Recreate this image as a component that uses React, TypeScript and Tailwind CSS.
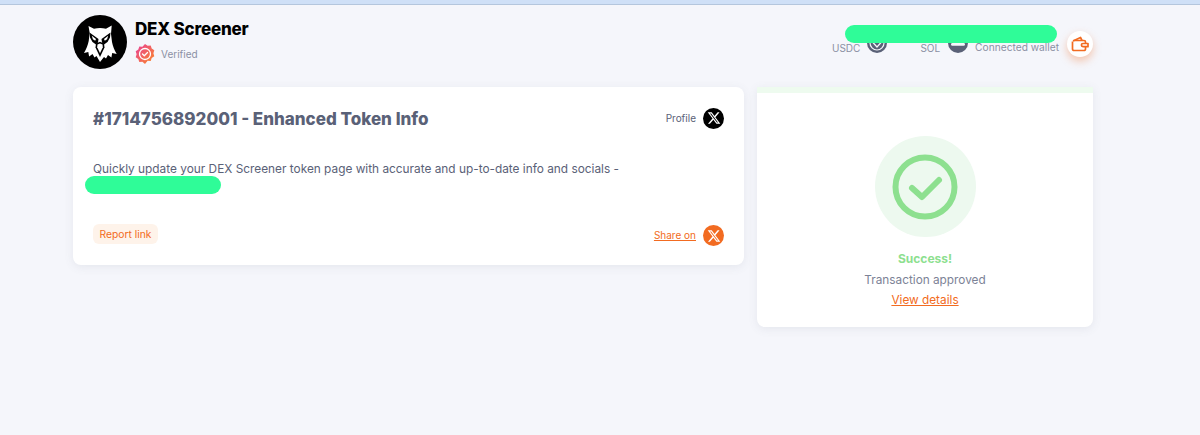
const XLogo = ({ className }: { className?: string }) => (
  <svg viewBox="0 0 24 24" className={className} fill="currentColor">
    <path d="M18.244 2.25h3.308l-7.227 8.26 8.502 11.24H16.17l-5.214-6.817L4.99 21.75H1.68l7.73-8.835L1.254 2.25H8.08l4.713 6.231zm-1.161 17.52h1.833L7.084 4.126H5.117z" />
  </svg>
);

const Eagle = () => (
  <svg viewBox="0 0 54 54" className="h-[54px] w-[54px]">
    <circle cx="27" cy="27" r="27" fill="#000" />
    {/* head */}
    <path d="M15.500 11l5.500 2.800c2-.6 4-.8 6-.8s4 .2 6 .8l5.700-3.300-.7 8.500 1 8c.8 4 2.300 8 4.700 12l-4.500-1-.8 4.500-3.400-2.500-2 3.500-2-1.500L27 47l-3.500-6-2 1.500-2-3.500-3.400 2.500-.8-4.500-4.300 1c2.400-4 3.900-8 4.700-12l1-8z" fill="#fff" />
    {/* brows and eyes */}
    <path d="M16.500 17.500l9 6.500-.5 3.500-2 2-3.500-2.500-2.500-4.500zM37.500 17.500l-9 6.500.5 3.500 2 2 3.500-2.500 2.500-4.500z" fill="#000" />
    <path d="M18.800 20.800l4.200 3.200-.8 1.800-2.300-1.500zM35.200 20.800l-4.200 3.200.8 1.800 2.300-1.500z" fill="#fff" />
    {/* beak */}
    <path d="M23 28.500l4-1.800 4 1.800 .5 4-4.500 9.500-4.500-9.500z" fill="#000" />
    <path d="M24.500 29.500l2.500-1 2.500 1 .3 2.800-2.800 6-2.800-6z" fill="#fff" />
  </svg>
);

const VerifiedBadge = () => (
  <svg viewBox="0 0 20 20" className="h-5 w-5">
    <defs>
      <linearGradient id="badge" x1="0" y1="0" x2="1" y2="1">
        <stop offset="0" stopColor="#e83e9a" />
        <stop offset="1" stopColor="#fb8b24" />
      </linearGradient>
    </defs>
    <path d="M10 0l2.600 1.700 3.100-.2 1 3 2.600 1.700-.9 3 .9 3-2.600 1.700-1 3-3.100-.2L10 20l-2.600-2.300-3.100.2-1-3L.7 13.200l.9-3-.9-3 2.600-1.700 1-3 3.100.2z" fill="url(#badge)" />
    <circle cx="10" cy="10" r="5.500" fill="none" stroke="#fff" strokeWidth="1.300" />
    <path d="M7.500 10l1.800 1.800 3.200-3.300" fill="none" stroke="#fff" strokeWidth="1.300" strokeLinecap="round" strokeLinejoin="round" />
  </svg>
);

const WalletIcon = () => (
  <svg viewBox="0 0 18 18" className="h-[18px] w-[18px]" fill="none" stroke="#f26b21" strokeWidth="1.700" strokeLinejoin="round">
    <path d="M1.500 6.500V14a1.500 1.500 0 0 0 1.500 1.500h10A1.500 1.500 0 0 0 14.500 14V7A1.500 1.500 0 0 0 13 5.500H2.500" />
    <path d="M2 6l7.500-3.500L11 5.500" />
    <path d="M17 8.500h-5a1.600 1.600 0 0 0 0 3.200h5z" fill="#fff" />
  </svg>
);

const UsdcIcon = () => (
  <svg viewBox="0 0 20 20" className="mb-[2px] ml-[7px] h-5 w-5">
    <circle cx="10" cy="10" r="10" fill="#5a6177" />
    <circle cx="10" cy="10" r="7" fill="none" stroke="#f5f6fb" strokeWidth="1.200" />
    <path d="M5.500 9l4.500 5 4.500-5" fill="none" stroke="#f5f6fb" strokeWidth="1.200" />
  </svg>
);

const SolIcon = () => (
  <svg viewBox="0 0 20 20" className="mb-[2px] ml-[8px] h-5 w-5">
    <circle cx="10" cy="10" r="10" fill="#5a6177" />
    <rect x="3" y="10" width="14" height="2.800" rx="1.400" fill="#f5f6fb" />
  </svg>
);

export default function App() {
  return (
    <div className="relative min-h-[435px] w-full bg-[#f5f6fb] font-['Inter',sans-serif]">
      <div className="h-[5px] border-b border-[#b4c6dd] bg-[#cfe0f7]" />

      <div className="ml-[73px] w-[1020px]">
        {/* Header */}
        <div className="flex h-[82px] items-start justify-between pt-[10px]">
          <div className="flex items-center gap-[8px]">
            <Eagle />
            <div className="-mt-[3px] flex flex-col">
              <span className="text-[17px] leading-[24px] font-extrabold tracking-[-0.2px] text-black">DEX Screener</span>
              <div className="mt-[3px] flex items-center gap-[6px]">
                <VerifiedBadge />
                <span className="text-[10px] text-[#8b90a3]">Verified</span>
              </div>
            </div>
          </div>

          <div className="relative mt-[16px] flex items-center">
            <span className="mt-[8px] text-[10px] text-[#8b90a3]">USDC</span>
            <UsdcIcon />
            <span className="mt-[8px] ml-[33px] text-[10px] text-[#8b90a3]">SOL</span>
            <SolIcon />
            <span className="mt-[8px] ml-[7px] text-[10.200px] text-[#8b90a3]">Connected wallet</span>
            <span className="ml-[8px] flex h-[26px] w-[26px] items-center justify-center rounded-full bg-white shadow-[0_4px_8px_rgba(242,107,33,0.35)]">
              <WalletIcon />
            </span>
            <span className="absolute top-[-6px] left-[13px] h-[18px] w-[212px] rounded-full bg-[#2ffc98]" />
          </div>
        </div>

        <div className="flex items-start gap-[13px]">
          {/* Link card */}
          <div className="relative flex h-[178px] w-[671px] flex-col rounded-[8px] bg-white px-[20px] shadow-[0_2px_10px_rgba(90,97,119,0.1)]">
            <div className="mt-[21px] flex items-center justify-between">
              <h1 className="text-[17px] leading-[22px] font-extrabold text-[#5a6177]">#1714756892001 - Enhanced Token Info</h1>
              <div className="-mt-[2px] flex items-center gap-[7px]">
                <span className="text-[10px] text-[#5a6177]">Profile</span>
                <span className="flex h-[21px] w-[21px] items-center justify-center rounded-full bg-black text-white">
                  <XLogo className="h-[14px] w-[14px]" />
                </span>
              </div>
            </div>
            <p className="mt-[29px] text-[11.850px] leading-[20px] text-[#5a6177]">
              Quickly update your DEX Screener token page with accurate and up-to-date info and socials -
            </p>
            <span className="absolute top-[89px] left-[12px] h-[18px] w-[136px] rounded-full bg-[#2ffc98]" />
            <div className="mt-auto mb-[19px] flex items-center justify-between">
              <span className="-mt-[3px] rounded-[6px] bg-[#fef3ea] px-[6.500px] py-[3px] text-[10.300px] leading-[14px] text-[#f26b21]">Report link</span>
              <div className="flex items-center gap-[7px]">
                <span className="text-[10px] text-[#f26b21] underline">Share on</span>
                <span className="flex h-[21px] w-[21px] items-center justify-center rounded-full bg-[#f26b21] text-white">
                  <XLogo className="h-[14px] w-[14px]" />
                </span>
              </div>
            </div>
          </div>

          {/* Status card */}
          <div className="flex h-[240px] w-[336px] flex-col items-center rounded-b-[8px] border-t-[6px] border-[#eefbef] bg-white shadow-[0_2px_10px_rgba(90,97,119,0.1)]">
            <div className="mt-[43px] flex h-[101px] w-[101px] items-center justify-center rounded-full bg-[#edf9ef]">
              <svg viewBox="0 0 66 66" className="h-[66px] w-[66px]" fill="none" stroke="#8de08f" strokeLinecap="round" strokeLinejoin="round">
                <circle cx="33" cy="33" r="29.500" strokeWidth="6" />
                <path d="M20 34l10 9 17-17" strokeWidth="6" />
              </svg>
            </div>
            <span className="mt-[13px] text-[12px] leading-[18px] font-bold text-[#8de08f]">Success!</span>
            <span className="mt-[3px] text-[11.800px] leading-[18px] text-[#7c8296]">Transaction approved</span>
            <span className="mt-[2px] text-[11.800px] leading-[18px] text-[#f26b21] underline">View details</span>
          </div>
        </div>
      </div>
    </div>
  );
}
